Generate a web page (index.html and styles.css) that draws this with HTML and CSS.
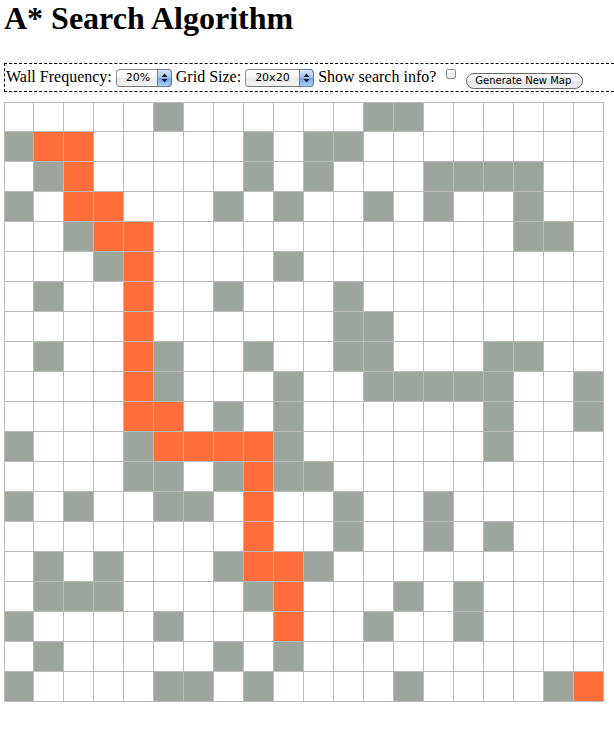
FILE: index.html
```html
<!DOCTYPE html>
<html lang="en">
<head>
<meta charset="utf-8">
<title>A* Search Algorithm</title>
<link rel="stylesheet" href="styles.css">
</head>
<body>
<h1 class="title">A* Search Algorithm</h1>
<div class="controls">Wall Frequency: <span class="select"><select class="sel-freq"><option>20%</option></select><span class="arrows"><svg width="13" height="16" viewBox="0 0 13 16"><polygon points="3.5,7 6.5,3.5 9.5,7"/><polygon points="3.5,9 6.5,12.5 9.5,9"/></svg></span></span> Grid Size: <span class="select"><select class="sel-size"><option>20x20</option></select><span class="arrows"><svg width="13" height="16" viewBox="0 0 13 16"><polygon points="3.5,7 6.5,3.5 9.5,7"/><polygon points="3.5,9 6.5,12.5 9.5,9"/></svg></span></span> Show search info? <input type="checkbox" class="check"> <button class="gen">Generate New Map</button></div>
<div class="grid">
<span></span><span></span><span></span><span></span><span></span><span class="w"></span><span></span><span></span><span></span><span></span><span></span><span></span><span class="w"></span><span class="w"></span><span></span><span></span><span></span><span></span><span></span><span></span>
<span class="w"></span><span class="p"></span><span class="p"></span><span></span><span></span><span></span><span></span><span></span><span class="w"></span><span></span><span class="w"></span><span class="w"></span><span></span><span></span><span></span><span></span><span></span><span></span><span></span><span></span>
<span></span><span class="w"></span><span class="p"></span><span></span><span></span><span></span><span></span><span></span><span class="w"></span><span></span><span class="w"></span><span></span><span></span><span></span><span class="w"></span><span class="w"></span><span class="w"></span><span class="w"></span><span></span><span></span>
<span class="w"></span><span></span><span class="p"></span><span class="p"></span><span></span><span></span><span></span><span class="w"></span><span></span><span class="w"></span><span></span><span></span><span class="w"></span><span></span><span class="w"></span><span></span><span></span><span class="w"></span><span></span><span></span>
<span></span><span></span><span class="w"></span><span class="p"></span><span class="p"></span><span></span><span></span><span></span><span></span><span></span><span></span><span></span><span></span><span></span><span></span><span></span><span></span><span class="w"></span><span class="w"></span><span></span>
<span></span><span></span><span></span><span class="w"></span><span class="p"></span><span></span><span></span><span></span><span></span><span class="w"></span><span></span><span></span><span></span><span></span><span></span><span></span><span></span><span></span><span></span><span></span>
<span></span><span class="w"></span><span></span><span></span><span class="p"></span><span></span><span></span><span class="w"></span><span></span><span></span><span></span><span class="w"></span><span></span><span></span><span></span><span></span><span></span><span></span><span></span><span></span>
<span></span><span></span><span></span><span></span><span class="p"></span><span></span><span></span><span></span><span></span><span></span><span></span><span class="w"></span><span class="w"></span><span></span><span></span><span></span><span></span><span></span><span></span><span></span>
<span></span><span class="w"></span><span></span><span></span><span class="p"></span><span class="w"></span><span></span><span></span><span class="w"></span><span></span><span></span><span class="w"></span><span class="w"></span><span></span><span></span><span></span><span class="w"></span><span class="w"></span><span></span><span></span>
<span></span><span></span><span></span><span></span><span class="p"></span><span class="w"></span><span></span><span></span><span></span><span class="w"></span><span></span><span></span><span class="w"></span><span class="w"></span><span class="w"></span><span class="w"></span><span class="w"></span><span></span><span></span><span class="w"></span>
<span></span><span></span><span></span><span></span><span class="p"></span><span class="p"></span><span></span><span class="w"></span><span></span><span class="w"></span><span></span><span></span><span></span><span></span><span></span><span></span><span class="w"></span><span></span><span></span><span class="w"></span>
<span class="w"></span><span></span><span></span><span></span><span class="w"></span><span class="p"></span><span class="p"></span><span class="p"></span><span class="p"></span><span class="w"></span><span></span><span></span><span></span><span></span><span></span><span></span><span class="w"></span><span></span><span></span><span></span>
<span></span><span></span><span></span><span></span><span class="w"></span><span class="w"></span><span></span><span class="w"></span><span class="p"></span><span class="w"></span><span class="w"></span><span></span><span></span><span></span><span></span><span></span><span></span><span></span><span></span><span></span>
<span class="w"></span><span></span><span class="w"></span><span></span><span></span><span class="w"></span><span class="w"></span><span></span><span class="p"></span><span></span><span></span><span class="w"></span><span></span><span></span><span class="w"></span><span></span><span></span><span></span><span></span><span></span>
<span></span><span></span><span></span><span></span><span></span><span></span><span></span><span></span><span class="p"></span><span></span><span></span><span class="w"></span><span></span><span></span><span class="w"></span><span></span><span class="w"></span><span></span><span></span><span></span>
<span></span><span class="w"></span><span></span><span class="w"></span><span></span><span></span><span></span><span class="w"></span><span class="p"></span><span class="p"></span><span class="w"></span><span></span><span></span><span></span><span></span><span></span><span></span><span></span><span></span><span></span>
<span></span><span class="w"></span><span class="w"></span><span class="w"></span><span></span><span></span><span></span><span></span><span class="w"></span><span class="p"></span><span></span><span></span><span></span><span class="w"></span><span></span><span class="w"></span><span></span><span></span><span></span><span></span>
<span class="w"></span><span></span><span></span><span></span><span></span><span class="w"></span><span></span><span></span><span></span><span class="p"></span><span></span><span></span><span class="w"></span><span></span><span></span><span class="w"></span><span></span><span></span><span></span><span></span>
<span></span><span class="w"></span><span></span><span></span><span></span><span></span><span></span><span class="w"></span><span></span><span class="w"></span><span></span><span></span><span></span><span></span><span></span><span></span><span></span><span></span><span></span><span></span>
<span class="w"></span><span></span><span></span><span></span><span></span><span class="w"></span><span class="w"></span><span></span><span class="w"></span><span></span><span></span><span></span><span></span><span class="w"></span><span></span><span></span><span></span><span></span><span class="w"></span><span class="p"></span>
</div>
</body>
</html>
```

FILE: styles.css
```css
html, body {
  margin: 0;
  padding: 0;
  background: #fff;
}

body {
  padding-left: 4px;
  font-family: "Liberation Serif", "Times New Roman", serif;
  font-size: 16px;
  color: #000;
}

.title {
  margin: 0 0 27px 0;
  font-size: 32px;
  line-height: 36px;
  font-weight: bold;
}

.controls {
  border: 1px dashed #000;
  border-right: 0;
  padding: 2px 0 2px 1px;
  line-height: 21px;
  white-space: nowrap;
}

.select {
  display: inline-block;
  position: relative;
  vertical-align: middle;
  height: 18px;
  line-height: 0;
}

.select select {
  -webkit-appearance: none;
  appearance: none;
  margin: 0;
  height: 18px;
  padding: 0 0 0 9px;
  border: 1px solid #8f8f8f;
  border-bottom-color: #777;
  border-radius: 4px;
  background: linear-gradient(#ffffff, #f6f6f6 45%, #e9e9e9 55%, #f4f4f4);
  font-family: "DejaVu Sans", "Liberation Sans", sans-serif;
  font-size: 11px;
  line-height: 16px;
  color: #000;
  box-sizing: border-box;
}

.sel-freq { width: 56px; }
.sel-size { width: 69px; }

.arrows {
  position: absolute;
  right: 0;
  top: 0;
  width: 15px;
  height: 18px;
  box-sizing: border-box;
  border: 1px solid #5e7fb0;
  border-radius: 0 4px 4px 0;
  background: linear-gradient(#d6e6f8, #a5c8f2 45%, #6ea6ec 55%, #a9d2fb);
}

.arrows svg {
  display: block;
  fill: #1e1e1e;
}

.check {
  -webkit-appearance: none;
  appearance: none;
  width: 10px;
  height: 10px;
  margin: 0 0 0 6px;
  border: 1px solid #8a8a8a;
  border-radius: 2px;
  background: linear-gradient(#ffffff, #e4e4e4);
  vertical-align: 3px;
  box-sizing: border-box;
}

.gen {
  -webkit-appearance: none;
  appearance: none;
  margin: 0 0 0 6px;
  height: 16px;
  padding: 0 11px 0 8px;
  border: 1px solid #6a6a6a;
  border-radius: 8px;
  background: linear-gradient(#ffffff, #f3f3f3 45%, #e3e3e3 55%, #f1f1f1);
  font-family: "DejaVu Sans", "Liberation Sans", sans-serif;
  font-size: 10px;
  line-height: 14px;
  color: #000;
  vertical-align: -2px;
  box-sizing: border-box;
}

.grid {
  display: grid;
  grid-template-columns: 28px repeat(19, 29px);
  grid-template-rows: 28px repeat(19, 29px);
  gap: 1px;
  padding: 1px;
  width: max-content;
  margin-top: 10px;
  background: #bbb;
}

.grid > span {
  background: #fff;
}

.grid > .w {
  background: #9da69c;
}

.grid > .p {
  background: #ff6f3c;
}
```
